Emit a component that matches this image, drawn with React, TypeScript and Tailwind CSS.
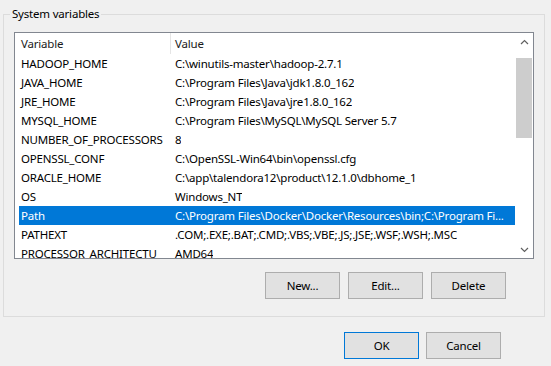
import React from "react";

const rows: [string, string][] = [
  ["HADOOP_HOME", "C:\\winutils-master\\hadoop-2.7.1"],
  ["JAVA_HOME", "C:\\Program Files\\Java\\jdk1.8.0_162"],
  ["JRE_HOME", "C:\\Program Files\\Java\\jre1.8.0_162"],
  ["MYSQL_HOME", "C:\\Program Files\\MySQL\\MySQL Server 5.7"],
  ["NUMBER_OF_PROCESSORS", "8"],
  ["OPENSSL_CONF", "C:\\OpenSSL-Win64\\bin\\openssl.cfg"],
  ["ORACLE_HOME", "C:\\app\\talendora12\\product\\12.1.0\\dbhome_1"],
  ["OS", "Windows_NT"],
  ["Path", "C:\\Program Files\\Docker\\Docker\\Resources\\bin;C:\\Program Fi..."],
  ["PATHEXT", ".COM;.EXE;.BAT;.CMD;.VBS;.VBE;.JS;.JSE;.WSF;.WSH;.MSC"],
  ["PROCESSOR_ARCHITECTU", "AMD64"],
];

function Btn({ label, primary }: { label: string; primary?: boolean }) {
  return (
    <div
      className={
        "w-[75px] h-[27px] shrink-0 flex items-center justify-center bg-[#e1e1e1] text-[11.5px] tracking-[-0.2px] text-black border " +
        (primary ? "border-[#0078d7]" : "border-[#adadad]")
      }
    >
      {label}
    </div>
  );
}

export default function App() {
  return (
    <div
      className="w-[551px] h-[366px] bg-[#f0f0f0] overflow-hidden text-black"
      style={{ fontFamily: '"Noto Sans", "Open Sans", sans-serif' }}
    >
      <div className="pt-[14px] pl-[3px]">
        <div className="relative w-[542px] h-[303px] border border-[#dcdcdc] pt-[17px] pl-[10px]">
          <div className="absolute -top-[9px] left-[6px] px-[2px] bg-[#f0f0f0] text-[11.5px] tracking-[-0.2px] leading-[16px]">
            System variables
          </div>
          <div className="w-[520px] h-[227px] border border-[#828790] bg-white flex overflow-hidden">
            <div className="w-[500px] shrink-0 h-full pl-[4px] overflow-hidden">
              <div className="flex h-[21px] text-[11.5px] tracking-[-0.2px] leading-[21px] text-[#1a1a1a]">
                <div className="w-[152px] shrink-0 pl-[2px] border-r border-[#e5e5e5]">Variable</div>
                <div className="pl-[4px]">Value</div>
              </div>
              {rows.map(([k, v]) => {
                const sel = k === "Path";
                return (
                  <div
                    key={k}
                    className={
                      "flex h-[19px] text-[11.5px] tracking-[-0.2px] leading-[19px] whitespace-nowrap " +
                      (sel ? "bg-[#0078d7] text-white" : "text-black")
                    }
                  >
                    <div className="w-[152px] shrink-0 pl-[2px] overflow-hidden">{k}</div>
                    <div className="pl-[4px] overflow-hidden">{v}</div>
                  </div>
                );
              })}
            </div>
            <div className="w-[18px] shrink-0 h-full flex flex-col items-center bg-white">
              <div className="h-[17px] w-full flex items-center justify-center">
                <svg width="9" height="6" viewBox="0 0 9 6">
                  <path d="M1 5 L4.5 1.5 L8 5" fill="none" stroke="#606060" strokeWidth="1.2" />
                </svg>
              </div>
              <div className="h-[8px]" />
              <div className="w-[16px] h-[80px] bg-[#cdcdcd]" />
              <div className="flex-1" />
              <div className="h-[17px] w-full flex items-center justify-center">
                <svg width="9" height="6" viewBox="0 0 9 6">
                  <path d="M1 1 L4.5 4.5 L8 1" fill="none" stroke="#606060" strokeWidth="1.2" />
                </svg>
              </div>
            </div>
          </div>
          <div className="flex justify-end gap-[8px] pr-[38px] mt-[13px] w-[530px]">
            <Btn label="New..." />
            <Btn label="Edit..." />
            <Btn label="Delete" />
          </div>
        </div>
      </div>
      <div className="flex justify-end gap-[7px] pr-[50px] mt-[15px]">
        <Btn label="OK" primary />
        <Btn label="Cancel" />
      </div>
    </div>
  );
}
